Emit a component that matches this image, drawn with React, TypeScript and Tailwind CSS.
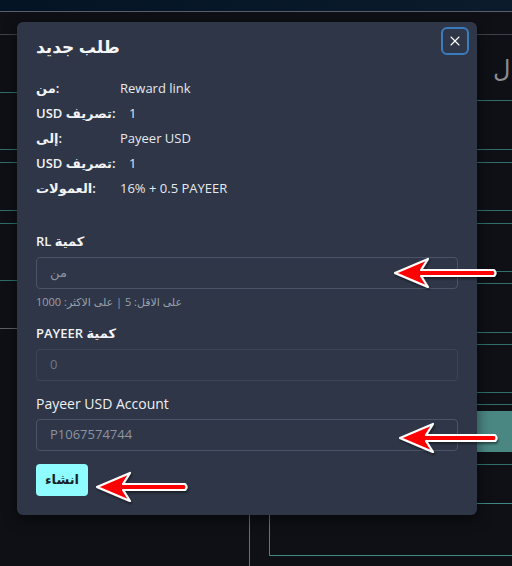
import React from 'react';
import { X } from 'lucide-react';

const font = { fontFamily: '"Open Sans", "DejaVu Sans", sans-serif' };

type ArrowProps = { left: number; top: number; length: number };

// red annotation arrow, tip on the left
const Arrow = ({ left, top, length }: ArrowProps) => {
  const w = length + 8;
  const d = `M4 16 L37 2 L30 13 L${w - 6} 13 Q${w - 3} 16 ${w - 6} 19 L30 19 L37 30 Z`;
  return (
    <svg
      className="absolute"
      style={{ left, top }}
      width={w}
      height={34}
      viewBox={`0 0 ${w} 34`}
    >
      <defs>
        <filter id={`sh${left}${top}`} x="-10%" y="-30%" width="130%" height="170%">
          <feDropShadow dx="1" dy="2" stdDeviation="1.2" floodColor="#000" floodOpacity="0.45" />
        </filter>
      </defs>
      <path
        d={d}
        fill="#ff0000"
        stroke="#ffffff"
        strokeWidth={2.2}
        strokeLinejoin="round"
        filter={`url(#sh${left}${top})`}
      />
    </svg>
  );
};

const InfoRow = ({ label, value, indent }: { label: string; value: string; indent?: boolean }) => (
  <div className="flex h-[25px] items-center text-[13px]">
    <div className="w-[84px] font-semibold text-[#f1f3f6]">{label}</div>
    <div className={`text-[#e6e9ee] ${indent ? 'pl-[9px]' : ''}`}>{value}</div>
  </div>
);

const Background = () => (
  <div className="flex h-[566px] w-[512px] flex-col bg-[#0e1016]">
    <div className="h-[12px] border-b border-[#59606b] bg-gradient-to-r from-[#041425] to-[#0b1b2b]" />
    <div className="flex h-[491px]">
      {/* left strip */}
      <div className="flex w-[17px] flex-col">
        <div className="h-[23px] border-b border-[#3d434c]" />
        <div className="h-[58px] border-b border-[#2f6e6b]" />
        <div className="h-[57px] border-b border-[#2f6e6b]" />
        <div className="h-[13px] border-b border-[#2f6e6b]" />
        <div className="h-[48px] border-b border-[#2f6e6b]" />
        <div className="h-[13px] border-b border-[#2f6e6b]" />
        <div className="h-[57px] border-b border-[#2f6e6b]" />
        <div className="h-[48px] border-b border-[#5b6068]" />
      </div>
      <div className="flex-1" />
      {/* right strip */}
      <div className="flex w-[35px] flex-col">
        <div className="h-[23px] border-b border-[#3d434c]" />
        <div className="flex h-[66px] items-start border-b border-[#2f6e6b] pl-[16px] pt-[18px]">
          <span className="text-[24px] leading-[30px] text-[#8b8d92]" style={font}>
            ل
          </span>
        </div>
        <div className="h-[49px] border-b border-[#2f6e6b]" />
        <div className="h-[13px] border-b border-[#2f6e6b]" />
        <div className="h-[48px] border-b border-[#2f6e6b]" />
        <div className="h-[13px] border-b border-[#2f6e6b]" />
        <div className="h-[48px] border-b border-[#2f6e6b]" />
        <div className="h-[12px] border-b border-[#2f6e6b]" />
        <div className="h-[49px] border-b border-[#2f6e6b]" />
        <div className="h-[12px] border-b border-[#2f6e6b]" />
        <div className="h-[48px] border-b border-[#2f6e6b]" />
        <div className="h-[12px] border-b border-[#2f6e6b]" />
        <div className="flex h-[60px] flex-col border-b border-[#2f6e6b] pt-[6px]">
          <div className="h-[41px] bg-[#4a8783]" />
        </div>
      </div>
    </div>
    <div className="flex flex-1">
      <div className="w-[250px] border-r border-[#6a6e75]" />
      <div className="ml-[19px] h-[53px] flex-1 border-b border-l border-t border-[#3f8884]" />
    </div>
  </div>
);

export default function App() {
  return (
    <div className="relative h-[566px] w-[512px] overflow-hidden" style={font}>
      <Background />

      <div className="absolute left-[17px] top-[22px] flex h-[493px] w-[460px] flex-col rounded-[6px] bg-[#2e3647] px-[19px] pb-[19px] shadow-[0_4px_14px_rgba(0,0,0,0.5)]">
        {/* header */}
        <div className="flex h-[33px] items-start justify-between pt-[5px]">
          <h2 className="mt-[8px] text-[17px] font-bold leading-[24px] text-[#f4f5f7]">طلب جديد</h2>
          <button className="mr-[-11px] flex h-[28px] w-[28px] items-center justify-center rounded-[6px] border-2 border-[#3b7cc0] text-white">
            <X size={16} strokeWidth={1.6} />
          </button>
        </div>

        <div className="mt-[21px] flex flex-col">
          <InfoRow label="من:" value="Reward link" />
          <InfoRow label="USD تصريف:" value="1" indent />
          <InfoRow label="إلى:" value="Payeer USD" />
          <InfoRow label="USD تصريف:" value="1" indent />
          <InfoRow label="العمولات:" value="16% + 0.5 PAYEER" />
        </div>

        <label className="mt-[30px] h-[20px] text-[13px] font-semibold leading-[20px] text-[#f1f3f6]">RL كمية</label>
        <div className="mt-[6px] flex h-[32px] items-center rounded-[4px] border border-[#4b5466] px-[13px] text-[13px] text-[#8c94a3]">
          من
        </div>
        <div className="mt-[5px] text-[11px] leading-[16px] text-[#9aa1ac]">على الاقل: 5 | على الاكثر: 1000</div>

        <label className="mt-[13px] h-[20px] text-[13px] font-semibold leading-[20px] text-[#f1f3f6]">PAYEER كمية</label>
        <div className="mt-[6px] flex h-[32px] items-center rounded-[4px] border border-[#3c4456] px-[13px] text-[13px] text-[#6f7888]">
          0
        </div>

        <label className="mt-[13px] h-[20px] text-[14px] leading-[20px] text-[#eef0f3]">Payeer USD Account</label>
        <div className="mt-[5px] flex h-[32px] items-center rounded-[4px] border border-[#4b5466] px-[13px] text-[13px] text-[#8c94a3]">
          P1067574744
        </div>

        <div className="mt-[13px]">
          <button className="h-[32px] w-[52px] rounded-[4px] bg-[#8ffcff] text-[13px] font-bold text-[#1a1f28]">
            انشاء
          </button>
        </div>
      </div>

      <Arrow left={391} top={257} length={101} />
      <Arrow left={396} top={422} length={97} />
      <Arrow left={93} top={471} length={90} />
    </div>
  );
}
